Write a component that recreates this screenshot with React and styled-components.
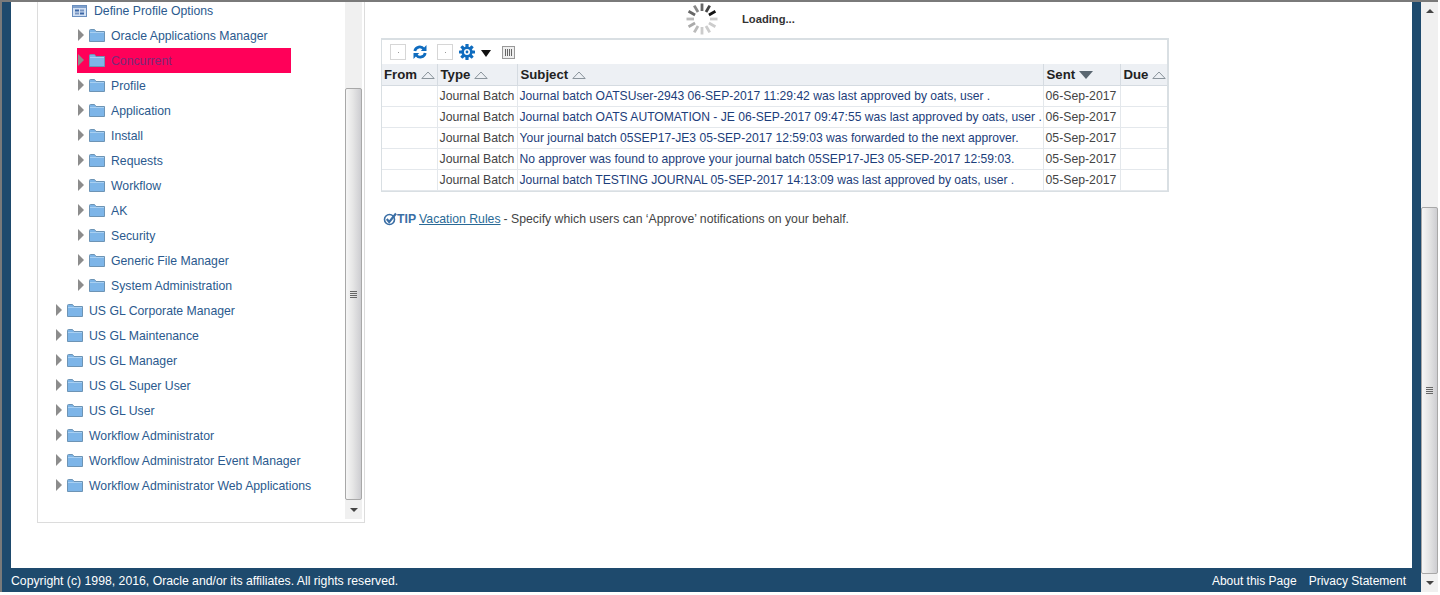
import React from "react";
import styled, { createGlobalStyle } from "styled-components";

const GlobalStyle = createGlobalStyle`
  html, body {
    margin: 0;
    padding: 0;
    background: #fff;
    overflow: hidden;
  }
  body {
    font-family: "Liberation Sans", Arial, sans-serif;
    font-size: 12.25px;
  }
`;

const Page = styled.div`
  width: 1440px;
  height: 595px;
  display: flex;
  flex-direction: column;
  background: #fff;
`;

const TopLine = styled.div`
  height: 2px;
  width: 1438px;
  background: #7a7a7a;
  flex: none;
`;

const Frame = styled.div`
  display: flex;
  width: 1438px;
  height: 590px;
  flex: none;
`;

const LeftEdge = styled.div`
  width: 2px;
  background: #7a7a7a;
  flex: none;
`;

const AppArea = styled.div`
  width: 1419px;
  display: flex;
  flex-direction: column;
  background: #1e4a6d;
`;

const Content = styled.div`
  height: 566px;
  margin: 0 9px;
  background: #fff;
  display: flex;
  flex: none;
`;

const TreePanel = styled.div`
  width: 326px;
  height: 520px;
  margin-left: 26px;
  display: flex;
  flex: none;
  border: 1px solid #dcdcdc;
  border-top: none;
`;

const TreeList = styled.div`
  width: 306px;
  flex: none;
`;

const Row = styled.div`
  height: ${(p) => (p.$first ? 21 : 25)}px;
  padding-bottom: ${(p) => (p.$first ? 4 : 0)}px;
  box-sizing: border-box;
  display: flex;
  align-items: center;
  margin-left: ${(p) => p.$indent}px;
  width: ${(p) => (p.$selected ? "214px" : "auto")};
  background: ${(p) => (p.$selected ? "#ff0059" : "transparent")};
  color: ${(p) => (p.$selected ? "#7a2a78" : "#2b5a8e")};
  white-space: nowrap;
`;

const Arrow = styled.span`
  width: 0;
  height: 0;
  flex: none;
  margin-left: 1px;
  margin-right: 5px;
  margin-top: -2px;
  border-left: 6px solid #8c8c8c;
  border-top: 6px solid transparent;
  border-bottom: 6px solid transparent;
`;

const FolderIcon = styled.svg`
  flex: none;
  margin-top: -1px;
`;

const RowLabel = styled.span`
  margin-left: ${(p) => (p.$leaf ? 7 : 6)}px;
`;

const ScrollBar = styled.div`
  width: 17px;
  flex: none;
  margin-left: 1px;
  margin-bottom: 3px;
  background: #f0f0f0;
  display: flex;
  flex-direction: column;
  align-items: center;
`;

const ScrollTrack = styled.div`
  flex: 1;
  width: 100%;
  display: flex;
  flex-direction: column;
  padding-top: ${(p) => p.$top}px;
  box-sizing: border-box;
`;

const Thumb = styled.div`
  height: ${(p) => p.$height}px;
  box-sizing: border-box;
  border: 1px solid #a8a8a8;
  border-radius: 2px;
  background: linear-gradient(to right, #f6f6f6, #e6e6e6 45%, #cdcdd1);
  display: flex;
  align-items: center;
  justify-content: center;
`;

const Grip = styled.div`
  width: 7px;
  height: 7px;
  background: repeating-linear-gradient(to bottom, #666 0 1px, transparent 1px 2px);
`;

const ScrollArrow = styled.div`
  height: ${(p) => p.$size}px;
  flex: none;
  width: 100%;
  display: flex;
  align-items: center;
  justify-content: center;
  &::after {
    content: "";
    width: 0;
    height: 0;
    border-left: 4px solid transparent;
    border-right: 4px solid transparent;
    ${(p) => (p.$up ? "border-bottom: 4px solid #444;" : "border-top: 4px solid #444;")}
  }
`;

const RightPane = styled.div`
  margin-left: 16px;
  width: 788px;
  flex: none;
  display: flex;
  flex-direction: column;
`;

const LoadingBar = styled.div`
  height: 36px;
  display: flex;
  align-items: flex-start;
  padding-left: 304px;
  flex: none;
`;

const LoadingText = styled.span`
  margin-left: 23px;
  margin-top: 11px;
  font-size: 11.2px;
  line-height: 13px;
  font-weight: bold;
  color: #333;
`;

const TableBox = styled.div`
  border: 2px solid #d9dfe3;
  border-left-width: 1px;
  border-bottom-width: 1px;
  flex: none;
`;

const Toolbar = styled.div`
  height: 24px;
  display: flex;
  align-items: center;
  padding-left: 8px;
`;

const DisabledBtn = styled.span`
  width: 16px;
  height: 16px;
  box-sizing: border-box;
  border: 1px solid #d6d6d6;
  flex: none;
  display: flex;
  align-items: center;
  justify-content: center;
  margin-left: ${(p) => p.$before}px;
  margin-right: ${(p) => p.$after}px;
  &::after {
    content: "";
    width: 1px;
    height: 1px;
    background: #999;
  }
`;

const Grid = styled.table`
  border-collapse: collapse;
  table-layout: fixed;
  width: 785px;
`;

const Th = styled.th`
  height: 21px;
  padding: 1px 0 0 3px;
  box-sizing: border-box;
  background: #edf0f4;
  color: #222;
  font-size: 13.2px;
  font-weight: bold;
  text-align: left;
  white-space: nowrap;
  border-left: 1px solid #d5dbe1;
  border-bottom: 1px solid #d5dbe1;
  &:first-child {
    border-left: none;
    padding-left: 2px;
  }
`;

const Td = styled.td`
  height: 21px;
  padding: 0 0 0 2px;
  box-sizing: border-box;
  color: ${(p) => (p.$link ? "#1c3d7a" : "#444")};
  font-size: ${(p) => (p.$link ? "12.12px" : "12.25px")};
  white-space: nowrap;
  overflow: hidden;
  border-left: 1px solid #e4e8ec;
  border-bottom: 1px solid #e4e8ec;
  &:first-child {
    border-left: none;
  }
`;

const SortIcon = styled.svg`
  margin-left: 4px;
  vertical-align: 0;
`;

const Tip = styled.div`
  margin-top: 19px;
  display: flex;
  align-items: center;
  color: #444;
  height: 16px;
  padding-left: 2px;
`;

const TipLabel = styled.b`
  color: #3a6ea5;
  margin: 0 3px 0 0;
`;

const TipLink = styled.a`
  color: #2a6a96;
  text-decoration: underline;
  margin-right: 3px;
`;

const Footer = styled.div`
  height: 24px;
  padding: 1px 15px 0 9px;
  box-sizing: border-box;
  display: flex;
  align-items: center;
  justify-content: space-between;
  color: #fff;
  flex: none;
`;

const FooterLinks = styled.div`
  display: flex;
  gap: 12px;
  font-size: 12px;
`;

const PageBar = styled(ScrollBar)`
  margin: 0;
`;

const CaretIcon = styled.svg`
  margin: 3px 0 0 6px;
`;

const ColumnsIcon = styled.svg`
  margin-left: 11px;
`;

const Folder = () => (
  <FolderIcon width="16" height="13" viewBox="0 0 16 13">
    <path d="M.5 12.5V1.5a1 1 0 0 1 1-1h4l1.5 2h8.5v10z" fill="#7db5e8" stroke="#6d94b5" />
    <path d="M1 3.5h14" stroke="#a9d0f2" />
  </FolderIcon>
);

const PageIcon = () => (
  <svg width="15" height="12" viewBox="0 0 15 12">
    <rect x=".5" y=".5" width="14" height="11" fill="#d3e1f3" stroke="#6a8fbf" />
    <rect x="1" y="1" width="13" height="2" fill="#7fa0cc" />
    <rect x="3" y="4.5" width="4" height="2" fill="#3c66a5" />
    <rect x="8" y="4.5" width="4" height="2" fill="#7a97c4" />
    <rect x="3" y="7.5" width="4" height="2" fill="#7a97c4" />
    <rect x="8" y="7.5" width="4" height="2" fill="#3c66a5" />
  </svg>
);

const spinnerShades = ["#666", "#444", "#111", "#ccc", "#ccc", "#ccc", "#ccc", "#bbb", "#aaa", "#bbb", "#666", "#888"];

const Spinner = () => (
  <svg width="34" height="34" viewBox="0 0 34 34">
    {spinnerShades.map((shade, i) => (
      <line
        key={i}
        x1="17"
        y1="1.5"
        x2="17"
        y2="9"
        strokeWidth="2.8"
        stroke={shade}
        transform={`rotate(${i * 30} 17 17)`}
      />
    ))}
  </svg>
);

const Refresh = () => (
  <svg width="14" height="14" viewBox="0 0 14 14" fill="none" stroke="#0f6cbf" strokeWidth="2.8" style={{ flex: "none" }}>
    <path d="M1.8 6a5 5 0 0 1 9-2" />
    <path d="M13.5 0v6H7.8z" fill="#0f6cbf" stroke="none" />
    <path d="M12.2 8a5 5 0 0 1-9 2" />
    <path d="M.5 14V8h5.7z" fill="#0f6cbf" stroke="none" />
  </svg>
);

const Gear = () => (
  <svg width="16" height="16" viewBox="0 0 16 16" style={{ flex: "none" }}>
    <g fill="#0f6cbf">
      {[0, 45, 90, 135].map((a) => (
        <rect key={a} x="6.4" y="0" width="3.2" height="16" rx=".5" transform={`rotate(${a} 8 8)`} />
      ))}
      <circle cx="8" cy="8" r="5.6" />
    </g>
    <circle cx="8" cy="8" r="3" fill="#fff" />
    <circle cx="8" cy="8" r="1.4" fill="#0f6cbf" />
  </svg>
);

const Caret = () => (
  <CaretIcon width="10" height="7" viewBox="0 0 10 7">
    <path d="M0 0h10L5 7z" fill="#111" />
  </CaretIcon>
);

const Columns = () => (
  <ColumnsIcon width="13" height="13" viewBox="0 0 13 13">
    <rect x=".5" y=".5" width="12" height="12" fill="#eee" stroke="#999" />
    <path d="M3.5 3v7M5.5 3v7M7.5 3v7M9.5 3v7" stroke="#666" />
  </ColumnsIcon>
);

const Sort = ({ down }) => (
  <SortIcon width="14" height="8" viewBox="0 0 14 8">
    {down ? (
      <path d="M0 0h14L7 8z" fill="#5a6670" />
    ) : (
      <path d="M.8 7.5h12.4L7 1z" fill="none" stroke="#8a949c" />
    )}
  </SortIcon>
);

const TipIcon = () => (
  <svg width="14" height="14" viewBox="0 0 14 14" fill="none" style={{ flex: "none" }}>
    <circle cx="6.5" cy="7.5" r="5" stroke="#3a6ea5" strokeWidth="1.6" />
    <path d="M3.8 7l2.4 3L13 1.5" stroke="#3a6ea5" strokeWidth="2.2" />
  </svg>
);

const subFolders = [
  "Oracle Applications Manager",
  "Concurrent",
  "Profile",
  "Application",
  "Install",
  "Requests",
  "Workflow",
  "AK",
  "Security",
  "Generic File Manager",
  "System Administration",
];

const topFolders = [
  "US GL Corporate Manager",
  "US GL Maintenance",
  "US GL Manager",
  "US GL Super User",
  "US GL User",
  "Workflow Administrator",
  "Workflow Administrator Event Manager",
  "Workflow Administrator Web Applications",
];

const notifications = [
  ["Journal batch OATSUser-2943 06-SEP-2017 11:29:42 was last approved by oats, user .", "06-Sep-2017"],
  ["Journal batch OATS AUTOMATION - JE 06-SEP-2017 09:47:55 was last approved by oats, user .", "06-Sep-2017"],
  ["Your journal batch 05SEP17-JE3 05-SEP-2017 12:59:03 was forwarded to the next approver.", "05-Sep-2017"],
  ["No approver was found to approve your journal batch 05SEP17-JE3 05-SEP-2017 12:59:03.", "05-Sep-2017"],
  ["Journal batch TESTING JOURNAL 05-SEP-2017 14:13:09 was last approved by oats, user .", "05-Sep-2017"],
];

const FolderRow = ({ label, indent }) => (
  <Row $indent={indent} $selected={label === "Concurrent"}>
    <Arrow />
    <Folder />
    <RowLabel>{label}</RowLabel>
  </Row>
);

export default function App() {
  return (
    <Page>
      <GlobalStyle />
      <TopLine />
      <Frame>
        <LeftEdge />
        <AppArea>
          <Content>
            <TreePanel>
              <TreeList>
                <Row $first $indent={34}>
                  <PageIcon />
                  <RowLabel $leaf>Define Profile Options</RowLabel>
                </Row>
                {subFolders.map((f) => (
                  <FolderRow key={f} label={f} indent={39} />
                ))}
                {topFolders.map((f) => (
                  <FolderRow key={f} label={f} indent={17} />
                ))}
              </TreeList>
              <ScrollBar>
                <ScrollTrack $top={86}>
                  <Thumb $height={412}>
                    <Grip />
                  </Thumb>
                </ScrollTrack>
                <ScrollArrow $size={18} />
              </ScrollBar>
            </TreePanel>
            <RightPane>
              <LoadingBar>
                <Spinner />
                <LoadingText>Loading...</LoadingText>
              </LoadingBar>
              <TableBox>
                <Toolbar>
                  <DisabledBtn $before={0} $after={7} />
                  <Refresh />
                  <DisabledBtn $before={10} $after={6} />
                  <Gear />
                  <Caret />
                  <Columns />
                </Toolbar>
                <Grid>
                  <colgroup>
                    <col width="55" />
                    <col width="80" />
                    <col width="526" />
                    <col width="77" />
                    <col width="47" />
                  </colgroup>
                  <thead>
                    <tr>
                      <Th>From<Sort /></Th>
                      <Th>Type<Sort /></Th>
                      <Th>Subject<Sort /></Th>
                      <Th>Sent<Sort down /></Th>
                      <Th>Due<Sort /></Th>
                    </tr>
                  </thead>
                  <tbody>
                    {notifications.map(([subject, sent]) => (
                      <tr key={subject}>
                        <Td />
                        <Td>Journal Batch</Td>
                        <Td $link>{subject}</Td>
                        <Td>{sent}</Td>
                        <Td />
                      </tr>
                    ))}
                  </tbody>
                </Grid>
              </TableBox>
              <Tip>
                <TipIcon />
                <TipLabel>TIP</TipLabel>
                <TipLink>Vacation Rules</TipLink>
                <span>- Specify which users can ‘Approve’ notifications on your behalf.</span>
              </Tip>
            </RightPane>
          </Content>
          <Footer>
            <span>Copyright (c) 1998, 2016, Oracle and/or its affiliates. All rights reserved.</span>
            <FooterLinks>
              <span>About this Page</span>
              <span>Privacy Statement</span>
            </FooterLinks>
          </Footer>
        </AppArea>
        <PageBar>
          <ScrollArrow $size={18} $up />
          <ScrollTrack $top={187}>
            <Thumb $height={367}>
              <Grip />
            </Thumb>
          </ScrollTrack>
          <ScrollArrow $size={18} />
        </PageBar>
      </Frame>
    </Page>
  );
}
